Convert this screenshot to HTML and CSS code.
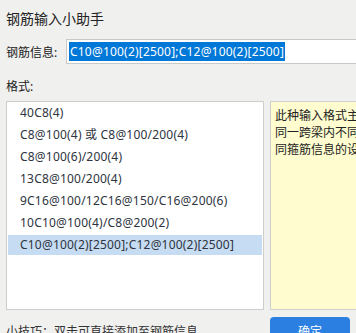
FILE: index.html
```html
<!DOCTYPE html>
<html lang="zh-CN">
<head>
    <meta charset="UTF-8">
    <meta name="viewport" content="width=device-width, initial-scale=1.0">
    <title>钢筋输入小助手</title>
    <link rel="stylesheet" href="styles.css">
</head>
<body>
    <div class="title">钢筋输入小助手</div>

    <div class="info-row">
        <span class="label">钢筋信息:</span>
        <div class="field"><span class="sel">C10@100(2)[2500];C12@100(2)[2500]</span></div>
    </div>

    <div class="format-label">格式:</div>

    <div class="main">
        <ul class="list">
            <li>40C8(4)</li>
            <li>C8@100(4) 或 C8@100/200(4)</li>
            <li>C8@100(6)/200(4)</li>
            <li>13C8@100/200(4)</li>
            <li>9C16@100/12C16@150/C16@200(6)</li>
            <li>10C10@100(4)/C8@200(2)</li>
            <li class="selected">C10@100(2)[2500];C12@100(2)[2500]</li>
        </ul>
        <div class="note">
            <div>此种输入格式主要用于设置</div>
            <div>同一跨梁内不同位置有不</div>
            <div>同箍筋信息的设置。</div>
        </div>
    </div>

    <div class="footer">
        <span class="tip">小技巧：双击可直接添加至钢筋信息</span>
        <button class="ok">确定</button>
    </div>
</body>
</html>
```

FILE: styles.css
```css
html, body {
    margin: 0;
    padding: 0;
    overflow: hidden;
}
body {
    font-family: "Noto Sans", "Noto Sans CJK SC", sans-serif;
    font-size: 12px;
    color: #333;
    background: #f0f0ef;
    width: 356px;
    height: 333px;
    padding: 0 0 0 6px;
    box-sizing: border-box;
}
.title {
    font-size: 14px;
    line-height: 20px;
    margin-top: 9px;
    color: #222;
}
.info-row {
    display: flex;
    align-items: center;
    margin-top: 10px;
    height: 25px;
}
.label {
    width: 60px;
    color: #222;
}
.field {
    flex: 1;
    height: 25px;
    box-sizing: border-box;
    background: white;
    border: 1px solid #c9c9c9;
    border-right: none;
    padding: 2px 0 0 2px;
    white-space: nowrap;
}
.sel {
    display: inline-block;
    background: #0078d7;
    color: white;
    line-height: 19px;
    padding: 0 1px;
    letter-spacing: 0.2px;
}
.format-label {
    line-height: 18px;
    margin-top: 14px;
    color: #222;
}
.main {
    display: flex;
    gap: 6px;
    margin-top: 5px;
    height: 209px;
}
.list {
    list-style: none;
    margin: 0;
    padding: 1px;
    width: 258px;
    box-sizing: border-box;
    background: white;
    border: 1px solid #cdcdcd;
    flex-shrink: 0;
}
.list li {
    height: 20px;
    line-height: 20px;
    margin-bottom: 2px;
    padding-left: 12px;
    white-space: nowrap;
    color: #2e3440;
    letter-spacing: 0.2px;
}
.list li.selected {
    background: #c6dcf2;
}
.note {
    flex-shrink: 0;
    width: 120px;
    box-sizing: border-box;
    background: #fffdd0;
    border: 1px solid #cfcfcf;
    padding: 5px 0 0 4px;
    line-height: 17px;
    white-space: nowrap;
    color: #222;
}
.footer {
    display: flex;
    align-items: center;
    justify-content: space-between;
    margin-top: 7px;
    width: 344px;
}
.tip {
    color: #333;
}
.ok {
    width: 80px;
    height: 28px;
    border: none;
    border-radius: 4px;
    background: #2b7fe1;
    color: white;
    font-family: inherit;
    font-size: 12px;
}
```
